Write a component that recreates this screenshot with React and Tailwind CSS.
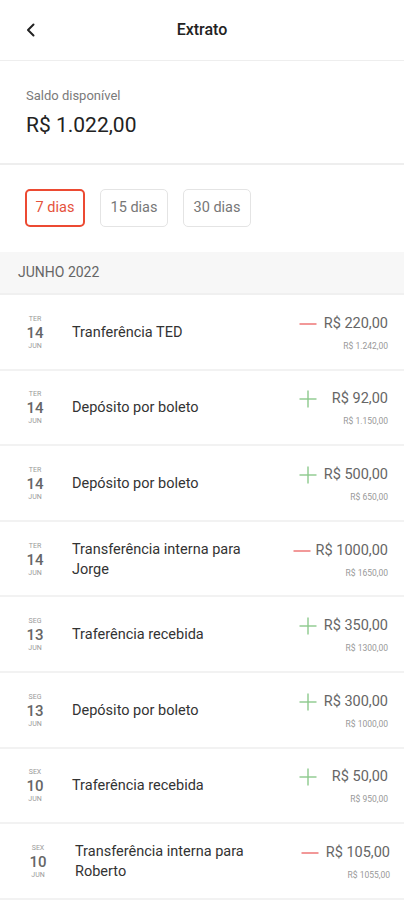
import React from "react";

const rows = [
  { d: "TER", n: "14", m: "JUN", t: "Tranferência TED", sign: "-", a: "R$ 220,00", b: "R$ 1.242,00" },
  { d: "TER", n: "14", m: "JUN", t: "Depósito por boleto", sign: "+", a: "R$ 92,00", b: "R$ 1.150,00" },
  { d: "TER", n: "14", m: "JUN", t: "Depósito por boleto", sign: "+", a: "R$ 500,00", b: "R$ 650,00" },
  { d: "TER", n: "14", m: "JUN", t: "Transferência interna para Jorge", sign: "-", a: "R$ 1000,00", b: "R$ 1650,00" },
  { d: "SEG", n: "13", m: "JUN", t: "Traferência recebida", sign: "+", a: "R$ 350,00", b: "R$ 1300,00" },
  { d: "SEG", n: "13", m: "JUN", t: "Depósito por boleto", sign: "+", a: "R$ 300,00", b: "R$ 1000,00" },
  { d: "SEX", n: "10", m: "JUN", t: "Traferência recebida", sign: "+", a: "R$ 50,00", b: "R$ 950,00" },
  { d: "SEX", n: "10", m: "JUN", t: "Transferência interna para Roberto", sign: "-", a: "R$ 105,00", b: "R$ 1055,00", last: true },
];

function Minus() {
  return (
    <svg width="18" height="18" viewBox="0 0 18 18" className="shrink-0">
      <line x1="0.5" y1="9" x2="17.5" y2="9" stroke="#ef7f7f" strokeWidth="1.6" />
    </svg>
  );
}
function Plus() {
  return (
    <svg width="18" height="18" viewBox="0 0 18 18" className="shrink-0">
      <line x1="0.5" y1="9" x2="17.5" y2="9" stroke="#8cc98c" strokeWidth="1.4" />
      <line x1="9" y1="0.5" x2="9" y2="17.5" stroke="#8cc98c" strokeWidth="1.4" />
    </svg>
  );
}

export default function App() {
  return (
    <div className="w-[404px] h-[900px] overflow-hidden bg-white" style={{ fontFamily: "Roboto, 'Liberation Sans', sans-serif" }}>
      <div className="h-[61px] flex items-center relative border-b border-[#eeeeee]">
        <svg width="12" height="14" viewBox="0 0 12 14" className="absolute left-[25px] top-[23px]">
          <path d="M8.5 1.5 L3 7 L8.5 12.5" fill="none" stroke="#222" strokeWidth="2" strokeLinecap="round" strokeLinejoin="round" />
        </svg>
        <div className="w-full text-center text-[16px] font-medium text-[#222]">Extrato</div>
      </div>
      <div className="h-[104px] border-b-2 border-[#eeeeee] pl-[26px] pt-[25px]">
        <div className="text-[13px] leading-[20px] text-[#7a7a7a]">Saldo disponível</div>
        <div className="text-[21px] leading-[28px] mt-[5px] text-[#222]">R$ 1.022,00</div>
      </div>
      <div className="h-[87px] flex items-center gap-[15px] pl-[25px] pb-[1px]">
        <div className="w-[60px] h-[38px] rounded-[5px] border-2 border-[#ec4a32] flex items-center justify-center text-[14.5px] text-[#e5523c]">7 dias</div>
        <div className="w-[68px] h-[38px] rounded-[5px] border border-[#e4e4e4] flex items-center justify-center text-[14.5px] text-[#777]">15 dias</div>
        <div className="w-[68px] h-[38px] rounded-[5px] border border-[#e4e4e4] flex items-center justify-center text-[14.5px] text-[#777]">30 dias</div>
      </div>
      <div className="h-[43px] bg-[#f7f7f7] flex items-center pl-[18px] text-[14px] text-[#666] border-b-2 border-[#f0f0f0]">JUNHO 2022</div>
      {rows.map((r, i) => (
        <div key={i} className={`h-[75.6px] pt-[2px] flex items-center border-b-2 border-[#f2f2f2] ${r.last ? "pl-[25px] pr-[14px]" : "pl-[22px] pr-[16px]"}`}>
          <div className="w-[26px] flex flex-col items-center text-[#888]">
            <div className="text-[7px] leading-[9px] text-[#999]">{r.d}</div>
            <div className="text-[15px] leading-[18px] font-medium text-[#666]">{r.n}</div>
            <div className="text-[7px] leading-[9px] text-[#999]">{r.m}</div>
          </div>
          <div className="ml-[24px] w-[190px] text-[14.5px] leading-[20px] text-[#333]">{r.t}</div>
          <div className="flex-1 flex flex-col items-end">
            <div className="flex items-center gap-[5px]">
              {r.sign === "-" ? <Minus /> : <Plus />}
              <div className="min-w-[66px] text-right text-[14.5px] leading-[20px] text-[#666]">{r.a}</div>
            </div>
            <div className="mt-[6px] text-[8.5px] leading-[12px] text-[#999]">{r.b}</div>
          </div>
        </div>
      ))}
    </div>
  );
}
